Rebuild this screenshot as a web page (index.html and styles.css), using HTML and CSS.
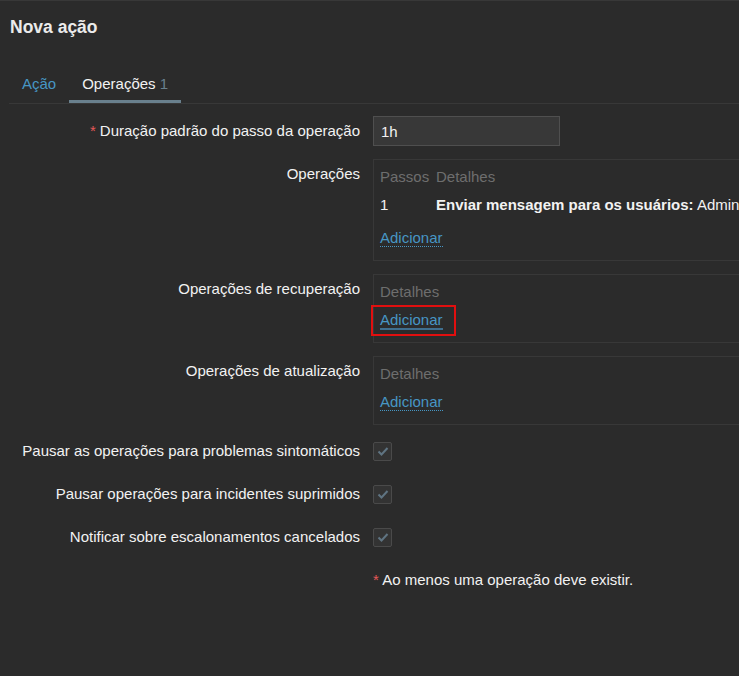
FILE: index.html
```html
<!DOCTYPE html>
<html lang="pt-BR">
<head>
    <meta charset="UTF-8">
    <meta name="viewport" content="width=device-width, initial-scale=1.0">
    <title>Nova ação</title>
    <link rel="stylesheet" href="styles.css">
</head>
<body>
    <div class="header">
        <h1>Nova ação</h1>
    </div>
    <ul class="tabs">
        <li><a href="#">Ação</a></li>
        <li class="active"><a href="#">Operações <span class="count">1</span></a></li>
    </ul>
    <div class="form">
        <div class="row">
            <label class="label"><span class="req">*</span> Duração padrão do passo da operação</label>
            <div class="field field-center">
                <input class="input" type="text" value="1h">
            </div>
        </div>
        <div class="row">
            <label class="label label-top">Operações</label>
            <div class="field">
                <div class="box">
                    <div class="box-row box-head">
                        <span class="col-step">Passos</span>
                        <span>Detalhes</span>
                    </div>
                    <div class="box-row">
                        <span class="col-step">1</span>
                        <span class="details"><b>Enviar mensagem para os usuários:</b> Admin (Zabbix Administrator) via todas as mídias</span>
                    </div>
                    <div class="box-row box-foot box-foot-gap">
                        <a href="#" class="link">Adicionar</a>
                    </div>
                </div>
            </div>
        </div>
        <div class="row">
            <label class="label label-top">Operações de recuperação</label>
            <div class="field">
                <div class="box">
                    <div class="box-row box-head">
                        <span>Detalhes</span>
                    </div>
                    <div class="box-row box-foot">
                        <span class="highlight"><a href="#" class="link link-hover">Adicionar</a></span>
                    </div>
                </div>
            </div>
        </div>
        <div class="row">
            <label class="label label-top">Operações de atualização</label>
            <div class="field">
                <div class="box">
                    <div class="box-row box-head">
                        <span>Detalhes</span>
                    </div>
                    <div class="box-row box-foot">
                        <a href="#" class="link">Adicionar</a>
                    </div>
                </div>
            </div>
        </div>
        <div class="checks">
            <div class="row row-check">
                <label class="label">Pausar as operações para problemas sintomáticos</label>
                <div class="field field-center">
                    <span class="checkbox"><svg width="14" height="14" viewBox="0 0 14 14"><polyline points="2.5,7.5 5.5,10.5 11.5,4" fill="none" stroke="#5f7482" stroke-width="2"/></svg></span>
                </div>
            </div>
            <div class="row row-check">
                <label class="label">Pausar operações para incidentes suprimidos</label>
                <div class="field field-center">
                    <span class="checkbox"><svg width="14" height="14" viewBox="0 0 14 14"><polyline points="2.5,7.5 5.5,10.5 11.5,4" fill="none" stroke="#5f7482" stroke-width="2"/></svg></span>
                </div>
            </div>
            <div class="row row-check">
                <label class="label">Notificar sobre escalonamentos cancelados</label>
                <div class="field field-center">
                    <span class="checkbox"><svg width="14" height="14" viewBox="0 0 14 14"><polyline points="2.5,7.5 5.5,10.5 11.5,4" fill="none" stroke="#5f7482" stroke-width="2"/></svg></span>
                </div>
            </div>
            <div class="row row-check">
                <div class="label"></div>
                <div class="field field-center">
                    <span class="note"><span class="req">*</span> Ao menos uma operação deve existir.</span>
                </div>
            </div>
        </div>
    </div>
</body>
</html>
```

FILE: styles.css
```css
body {
    font-family: "Liberation Sans", Arial, sans-serif;
    font-size: 15px;
    line-height: 18px;
    margin: 0;
    padding: 0;
    background-color: #2b2b2b;
    color: #f2f2f2;
    border-top: 1px solid #383838;
    overflow: hidden;
}
.header {
    padding: 16px 10px 0;
}
.header h1 {
    margin: 0;
    font-size: 17.5px;
    line-height: 20px;
    font-weight: bold;
    color: #ebebeb;
}
.tabs {
    list-style: none;
    margin: 28px 0 0 9px;
    padding: 0;
    display: flex;
    border-bottom: 1px solid #383838;
}
.tabs li {
    padding: 10px 13px 7px;
    border-bottom: 3px solid transparent;
}
.tabs li a {
    color: #4796c4;
    text-decoration: none;
}
.tabs li.active {
    border-bottom-color: #69808d;
}
.tabs li.active a {
    color: #f2f2f2;
}
.tabs .count {
    color: #69808d;
}
.form {
    padding-top: 12px;
}
.row {
    display: flex;
    gap: 13px;
    margin-bottom: 13px;
}
.label {
    width: 360px;
    flex-shrink: 0;
    text-align: right;
    display: flex;
    align-items: center;
    justify-content: flex-end;
}
.label-top {
    align-items: flex-start;
    padding-top: 6px;
}
.req {
    color: #e45959;
    margin-right: 4px;
}
.note .req {
    margin-right: 0;
}
.field {
    width: 600px;
    flex-shrink: 0;
}
.field-center {
    display: flex;
    align-items: center;
}
.input {
    box-sizing: border-box;
    width: 187px;
    height: 30px;
    background-color: #383838;
    border: 1px solid #4f4f4f;
    color: #f2f2f2;
    font-family: inherit;
    font-size: 15px;
    padding: 0 7px;
    outline: none;
}
.box {
    border: 1px solid #383838;
    padding: 3px 6px 8px;
}
.box-row {
    display: flex;
    align-items: center;
    height: 28px;
    white-space: nowrap;
}
.box-head {
    color: #6e6e6e;
}
.col-step {
    width: 56px;
    flex-shrink: 0;
}
.box-foot-gap {
    margin-top: 5px;
}
.link {
    color: #4796c4;
    text-decoration: none;
    border-bottom: 1px dotted #4796c4;
    line-height: 17px;
}
.link-hover {
    border-bottom: 2px solid #3f6f8f;
}
.highlight {
    display: inline-block;
    border: 2px solid #e10f0f;
    padding: 4px 11px 5px 7px;
    margin-left: -9px;
}
.checks {
    margin-top: -1px;
}
.row-check {
    height: 28px;
    margin-bottom: 15px;
}
.checkbox {
    box-sizing: border-box;
    width: 19px;
    height: 19px;
    border: 1px solid #4a4a4a;
    border-radius: 2px;
    background-color: #333333;
    display: flex;
    align-items: center;
    justify-content: center;
}
.note {
    color: #f2f2f2;
}
```
